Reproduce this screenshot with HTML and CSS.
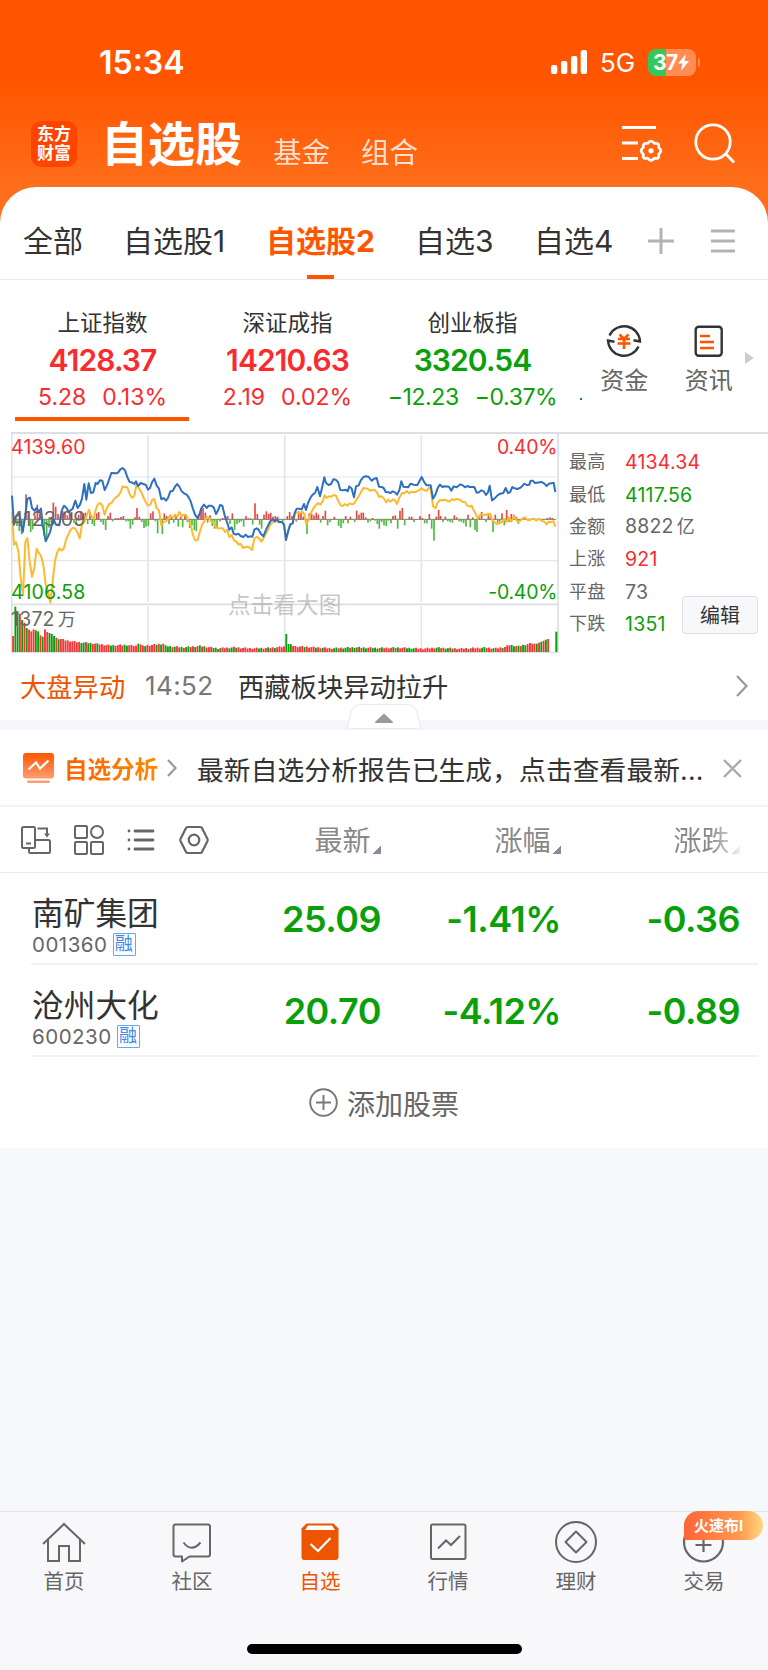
FILE: index.html
```
<!DOCTYPE html>
<html lang="zh-CN">
  <head>
    <meta charset="utf-8">
    <title>自选股</title>
    <link rel="stylesheet" href="styles.css">
  </head>
  <body>
    <header class="top">
      <div class="status">
        <span class="time">15:34</span>
        <svg class="signal" width="36" height="24" viewBox="0 0 36 24" fill="#fff">
          <rect x="0" y="15" width="6.3" height="9" rx="2"/>
          <rect x="10" y="11" width="6.3" height="13" rx="2"/>
          <rect x="20" y="6" width="6.3" height="18" rx="2"/>
          <rect x="29.7" y="0" width="6.3" height="24" rx="2"/>
        </svg>
        <span class="net">5G</span>
        <span class="battery">37<svg width="11" height="17" viewBox="0 0 11 17" fill="#fff"><path d="M8 0 0 9.500h4.500L3 17l8-10H6.500z"/></svg></span>
        <i class="battery-tip"></i>
      </div>
      <div class="nav">
        <div class="logo"><span>东方</span><span>财富</span></div>
        <h1>自选股</h1>
        <span class="nav-item">基金</span>
        <span class="nav-item">组合</span>
        <svg class="ico-filter" width="42" height="42" viewBox="0 0 42 42" fill="none" stroke="#fff" stroke-width="2.800">
          <path d="M1 4.500h34M1 20h16M1 35.500h16"/>
          <path stroke-linejoin="round" d="M25.600 20.200q3.400-4.400 6.800 0q5.400-.8 4.200 3.800q4.400 4 0 7.200q1.200 5-4.200 3.800q-3.400 4.600-6.800 0q-5.400 1.200-4.200-3.800q-4.400-3.200 0-7.200q-1.200-4.600 4.200-3.800z" transform="translate(1 .2)"/>
          <circle cx="30" cy="27.800" r="2.600" fill="#fff" stroke="none"/>
        </svg>
        <svg class="ico-search" width="42" height="42" viewBox="0 0 42 42" fill="none" stroke="#fff" stroke-width="2.800">
          <circle cx="19" cy="19" r="17.200"/>
          <path d="M32 31l8 8.500"/>
        </svg>
      </div>
    </header>

    <main class="panel">
      <nav class="groups">
        <span>全部</span>
        <span>自选股1</span>
        <span class="on">自选股2</span>
        <span>自选3</span>
        <span>自选4</span>
        <svg width="26" height="26" viewBox="0 0 26 26" stroke="#b3b3b3" stroke-width="3"><path d="M13 0v26M0 13h26"/></svg>
        <svg width="24" height="26" viewBox="0 0 24 26" stroke="#b3b3b3" stroke-width="2.800"><path d="M0 3h24M0 13h24M0 23h24"/></svg>
      </nav>

      <section class="indices">
        <div class="index up on">
          <span class="name">上证指数</span>
          <b>4128.37</b>
          <span class="chg"><span>5.28</span><span>0.13%</span></span>
        </div>
        <div class="index up">
          <span class="name">深证成指</span>
          <b>14210.63</b>
          <span class="chg"><span>2.19</span><span>0.02%</span></span>
        </div>
        <div class="index down">
          <span class="name">创业板指</span>
          <b>3320.54</b>
          <span class="chg"><span>−12.23</span><span>−0.37%</span></span>
        </div>
        <i class="next-dot"></i>
        <div class="tool">
          <svg width="36" height="36" viewBox="0 0 36 36" fill="none" stroke="#333" stroke-width="2.400">
            <path d="M3.500 12.500A16 16 0 0 1 34 18.500l-6.500-1.200M32.500 23.500A16 16 0 0 1 2 17.500l6.500 1.200"/>
            <path stroke="#ff5500" stroke-width="2.600" d="M13.500 11.500l4.500 4.500 4.500-4.500M12 16h12M11.500 20.500h13M18 16v10"/>
          </svg>
          <span>资金</span>
        </div>
        <div class="tool">
          <svg width="36" height="36" viewBox="0 0 36 36" fill="none" stroke="#333" stroke-width="2.400">
            <rect x="4.700" y="3.700" width="26" height="29" rx="3"/>
            <path stroke="#ff5500" stroke-width="2.500" d="M9 13h10M9 19h14M9 25h14"/>
          </svg>
          <span>资讯</span>
        </div>
        <svg class="more" width="9" height="12" viewBox="0 0 9 12" fill="#ccc"><path d="M0 0l9 6-9 6z"/></svg>
      </section>

      <section class="market">
        <div class="chart">
          <svg id="chart" width="548" height="221" viewBox="33 22 1644 663" fill="none">
            <g stroke="#e4e6ee" stroke-width="5">
              <path stroke-width="3.500" d="M33 157H1674M33 408H1674"/>
              <path d="M444 32V533M444 545V683M854 32V533M854 545V683M1264 32V533M1264 545V683"/>
              <path stroke="#dcdfe5" d="M33 539H1674M33 684H1677M35 24V684M1674 24V684"/>
            </g>
            <path stroke="#777" stroke-width="3" d="M37 284H1668"/>
            <g id="bars"></g>
            <g id="volume"></g>
            <polyline class="line-avg" points="36,262 42,360 48,353 55,378 62,460 69,512 76,352 82,340 89,410 96,456 103,430 110,372 116,384 123,394 130,420 137,480 144,500 151,534 158,470 165,408 171,385 178,371 185,378 192,370 198,345 205,330 212,315 219,309 226,312 233,325 239,342 246,300 253,292 260,272 267,255 274,275 281,282 287,256 293,240 300,235 307,243 314,270 320,253 327,238 334,236 341,225 348,218 355,213 362,202 368,185 375,188 382,188 389,208 396,219 403,213 409,181 416,190 423,200 430,217 437,232 444,243 451,240 457,225 463,223 470,250 477,258 484,303 491,292 498,290 505,281 511,271 518,280 525,270 532,276 538,262 545,274 552,270 559,272 566,290 573,305 579,332 586,347 593,347 600,320 607,298 613,290 620,277 627,279 634,291 641,292 648,308 655,311 668,311 675,322 682,315 688,338 695,331 702,347 709,351 715,360 722,357 729,370 736,367 743,366 750,370 756,376 763,342 770,336 777,341 784,351 790,342 797,328 804,315 811,300 818,293 825,290 832,291 839,293 846,293 852,299 858,343 864,320 870,300 878,296 885,265 892,264 899,267 906,260 913,268 919,299 926,285 933,265 940,251 947,242 954,235 961,240 968,230 974,212 980,220 987,215 994,216 1001,211 1008,213 1015,229 1022,242 1028,244 1035,238 1042,243 1049,236 1056,239 1062,237 1069,225 1076,215 1083,202 1090,190 1103,192 1110,198 1117,196 1124,195 1131,204 1138,217 1145,215 1152,222 1159,233 1165,225 1172,231 1179,224 1185,227 1191,238 1198,219 1206,205 1213,206 1220,199 1227,206 1234,201 1241,203 1248,201 1255,198 1265,191 1272,196 1280,199 1287,189 1292,192 1299,245 1306,251 1313,234 1320,226 1327,227 1334,225 1341,228 1348,231 1355,224 1362,226 1369,223 1380,225 1388,232 1395,232 1402,243 1410,246 1415,243 1420,255 1426,266 1434,282 1442,269 1449,270 1456,271 1463,268 1470,267 1476,285 1484,293 1491,299 1498,293 1505,293 1512,283 1519,292 1527,278 1534,291 1542,275 1548,285 1555,293 1562,287 1570,280 1577,281 1584,287 1600,282 1608,286 1618,283 1626,289 1633,291 1640,299 1646,291 1653,293 1660,289 1666,306"/>
            <polyline class="line-idx" points="36,213 42,300 48,275 58,268 68,322 75,280 82,223 90,219 96,250 103,258 110,250 116,262 123,252 128,300 137,350 150,323 160,282 168,300 178,302 185,258 192,243 200,250 206,262 218,252 226,228 233,250 240,240 246,222 253,178 259,225 266,176 273,205 280,203 287,175 293,178 300,167 307,168 314,196 322,180 334,145 350,146 355,143 361,134 368,130 375,137 383,160 389,172 395,173 403,178 408,170 414,184 422,175 430,178 437,180 444,195 450,190 456,173 463,162 470,183 477,192 484,224 491,220 498,228 504,220 511,200 518,199 525,186 531,178 538,186 545,200 552,206 560,210 566,218 572,230 578,250 585,270 592,280 598,270 604,250 612,240 620,250 626,243 634,243 641,248 648,268 655,255 660,241 667,243 674,272 682,295 688,315 695,308 701,327 708,330 715,327 722,334 730,337 737,330 744,337 750,335 757,336 763,315 770,311 776,315 783,328 790,335 797,318 804,303 811,290 818,284 824,290 830,284 838,292 846,292 852,300 858,346 865,318 871,299 878,296 884,265 890,252 898,252 905,254 912,238 918,256 924,235 932,218 938,210 945,205 952,187 960,215 966,190 973,158 978,175 986,181 993,178 1000,164 1007,165 1014,172 1021,196 1030,197 1038,195 1043,200 1048,185 1055,192 1062,218 1068,185 1076,182 1082,168 1090,157 1098,155 1105,156 1115,168 1123,162 1130,160 1137,186 1145,187 1151,190 1157,202 1165,203 1172,205 1178,200 1185,203 1191,210 1198,197 1204,170 1210,186 1224,188 1232,177 1240,180 1252,181 1265,157 1273,173 1280,182 1292,182 1299,222 1306,210 1314,188 1320,180 1327,187 1334,185 1347,186 1354,198 1361,185 1370,188 1381,179 1388,182 1395,188 1402,184 1409,187 1423,187 1430,204 1437,203 1444,197 1451,200 1458,211 1464,203 1469,183 1476,227 1483,222 1490,215 1498,208 1510,205 1517,190 1524,205 1530,203 1537,187 1544,191 1552,193 1560,190 1566,185 1573,177 1580,181 1588,180 1592,168 1598,168 1605,175 1625,172 1633,177 1640,184 1647,177 1661,174 1666,202"/>
          </svg>
          <span class="lab l1 red">4139.60</span>
          <span class="lab l2">4123.09</span>
          <span class="lab l3 green">4106.58</span>
          <span class="lab l4">1372<em>万</em></span>
          <span class="lab r1 red">0.40%</span>
          <span class="lab r2 green">-0.40%</span>
          <span class="hint">点击看大图</span>
        </div>
        <dl class="stats">
          <dt>最高</dt><dd class="red">4134.34</dd>
          <dt>最低</dt><dd class="green">4117.56</dd>
          <dt>金额</dt><dd>8822<em>亿</em></dd>
          <dt>上涨</dt><dd class="red">921</dd>
          <dt>平盘</dt><dd>73</dd>
          <dt>下跌</dt><dd class="green">1351</dd>
        </dl>
        <button class="edit">编辑</button>
      </section>

      <section class="news">
        <span class="tag">大盘异动</span>
        <span class="clock">14:52</span>
        <span class="headline">西藏板块异动拉升</span>
        <svg width="12" height="22" viewBox="0 0 12 22" fill="none" stroke="#999" stroke-width="2.200"><path d="M1 1l9.500 10L1 21"/></svg>
      </section>

      <div class="strip">
        <svg class="handle" width="76" height="27" viewBox="0 0 76 27">
          <path d="M1 25.500L5 9Q7 1.500 15 1.500H61Q69 1.500 71 9L75 25.500z" fill="#fff" stroke="#ececee" stroke-width="1.200"/>
          <path d="M38 10.500l9 8.500q.4 1-1 1H30q-1.400 0-1-1z" fill="#999"/>
        </svg>
      </div>

      <section class="analysis">
        <svg class="ana-ico" width="31" height="31" viewBox="0 0 31 31">
          <defs><linearGradient id="g" x1="0" y1="0" x2="0" y2="1"><stop offset="0" stop-color="#ff5500"/><stop offset="1" stop-color="#ff9d70"/></linearGradient></defs>
          <rect width="31" height="25.500" rx="3" fill="url(#g)"/>
          <path d="M5.500 16.500l7.500-7 4 6 8.500-8" fill="none" stroke="#fff" stroke-width="2.200"/>
          <rect x="4" y="27.500" width="23" height="2.500" rx="1.200" fill="#ff9d70"/>
        </svg>
        <b>自选分析</b>
        <svg class="ana-arrow" width="10" height="18" viewBox="0 0 10 18" fill="none" stroke="#999" stroke-width="2.200"><path d="M1 1l7.500 8L1 17"/></svg>
        <span class="msg">最新自选分析报告已生成，点击查看最新...</span>
        <svg width="19" height="19" viewBox="0 0 19 19" stroke="#aaa" stroke-width="2.400"><path d="M1 1l17 17M18 1L1 18"/></svg>
      </section>

      <section class="thead">
        <svg width="30" height="30" viewBox="0 0 30 30" fill="none" stroke="#666" stroke-width="2">
          <rect x="1" y="2" width="13" height="21" rx="1.500"/><path d="M5 18.500h5M16.500 3.500h9.500v6M14 15h13.500q1.500 0 1.500 1.500v10q0 1.500-1.500 1.500h-18q-1.500 0-1.500-1.500v-3"/><path fill="#666" stroke="none" d="M23 8.500h6l-3 4z"/>
        </svg>
        <svg width="30" height="30" viewBox="0 0 30 30" fill="none" stroke="#666" stroke-width="2">
          <rect x="1" y="1" width="12" height="12" rx="1"/><circle cx="23" cy="7" r="6"/><rect x="1" y="17" width="12" height="12" rx="1"/><rect x="17" y="17" width="12" height="12" rx="1"/>
        </svg>
        <svg width="30" height="30" viewBox="0 0 30 30" fill="none" stroke="#666" stroke-width="2.800" stroke-linecap="round">
          <path d="M9 6h18M9 15h18M9 24h18M3 6h.01M3 15h.01M3 24h.01"/>
        </svg>
        <svg width="30" height="30" viewBox="0 0 30 30" fill="none" stroke="#666" stroke-width="2.200" stroke-linejoin="round">
          <path d="M8.500 2h13q1 0 1.500 1l5.500 11q.5 1 0 2L23 27q-.5 1-1.500 1h-13q-1 0-1.500-1L1.500 16q-.5-1 0-2L7 3q.5-1 1.500-1z"/><circle cx="15" cy="15" r="5.300"/>
        </svg>
        <span class="col c1">最新</span>
        <span class="col c2">涨幅</span>
        <span class="col c3">涨跌</span>
      </section>

      <section class="stocks">
        <div class="stock">
          <div class="who"><span class="sname">南矿集团</span><span class="code">001360<i>融</i></span></div>
          <b>25.09</b><b>-1.41%</b><b>-0.36</b>
        </div>
        <div class="stock">
          <div class="who"><span class="sname">沧州大化</span><span class="code">600230<i>融</i></span></div>
          <b>20.70</b><b>-4.12%</b><b>-0.89</b>
        </div>
      </section>

      <div class="add">
        <svg width="29" height="29" viewBox="0 0 29 29" fill="none" stroke="#777" stroke-width="1.900"><circle cx="14.500" cy="14.500" r="13.300"/><path d="M14.500 7v15M7 14.500h15"/></svg>
        <span>添加股票</span>
      </div>
    </main>

    <footer class="tabbar">
      <div class="tab">
        <svg width="44" height="44" viewBox="0 0 44 44" fill="none" stroke="#666" stroke-width="2"><path d="M1 23L22 3l21 20M6 19v21h11V25h10v15h11V19"/></svg>
        <span>首页</span>
      </div>
      <div class="tab">
        <svg width="44" height="44" viewBox="0 0 44 44" fill="none" stroke="#666" stroke-width="2" stroke-linejoin="round"><path d="M5 3.500h33q2 0 2 2v28q0 2-2 2H19.500L12 40.500v-5H5.500q-2 0-2-2v-28q0-2 2-2zM13.500 21.500q8 10.500 17 0"/></svg>
        <span>社区</span>
      </div>
      <div class="tab on">
        <svg width="44" height="44" viewBox="0 0 44 44"><path d="M8.500 2.500h27l5 5V36q0 3-3 3h-31q-3 0-3-3V7.500z" fill="#ee5500"/><path d="M10 4.500h24l3 4.500H7z" fill="#fff"/><path d="M12.500 23l7.500 7L32.500 17" fill="none" stroke="#fff" stroke-width="2.200"/></svg>
        <span>自选</span>
      </div>
      <div class="tab">
        <svg width="44" height="44" viewBox="0 0 44 44" fill="none" stroke="#666" stroke-width="2"><rect x="5" y="3.500" width="34.500" height="34.500" rx="1.500"/><path d="M12 27.500l8-8 5 4.500 9-9"/></svg>
        <span>行情</span>
      </div>
      <div class="tab">
        <svg width="44" height="44" viewBox="0 0 44 44" fill="none" stroke="#666" stroke-width="2" stroke-linejoin="round"><circle cx="22" cy="21" r="20"/><path d="M22 10.500L32.500 21 22 31.500 11.500 21z"/></svg>
        <span>理财</span>
      </div>
      <div class="tab">
        <svg width="44" height="44" viewBox="0 0 44 44" fill="none" stroke="#666" stroke-width="2.200"><circle cx="21.500" cy="21" r="19.500"/><path d="M21.500 13v18M13.500 24h16"/></svg>
        <span>交易</span>
        <em class="promo">火速布I</em>
      </div>
      <i class="home-bar"></i>
    </footer>

    <script>
      const NS = "http://www.w3.org/2000/svg";

      function rect(parent, x, y, w, h, fill) {
        const r = document.createElementNS(NS, "rect");
        r.setAttribute("x", x);
        r.setAttribute("y", y);
        r.setAttribute("width", w);
        r.setAttribute("height", h);
        r.setAttribute("fill", fill);
        parent.appendChild(r);
      }

      // momentum bars around the zero line: [x, height], negative = below
      const bars = [
        [44,-12],[51,-20],[58,-35],[65,-45],[71,-22],[78,75],[85,15],[92,-38],[98,-30],[105,12],[112,44],[119,18],[126,-22],[133,-50],[140,-55],[147,-25],[154,-12],
        [160,50],[167,38],[174,16],[181,8],[188,25],[195,20],[202,12],[209,18],[215,22],[222,-10],[229,-16],[236,14],[243,24],[249,18],[256,20],[263,-14],[270,20],[277,-14],[283,-20],[290,18],[296,22],[303,-8],[310,-16],[317,-32],[324,10],[331,20],[338,-6],[347,4],[355,4],[363,7],[370,10],[378,-6],[385,-6],[391,-28],[398,-16],[405,6],[411,34],[418,8],[425,-8],[432,-26],[438,-22],[445,-20],[452,18],[459,24],[466,-6],[473,-42],[480,8],[487,-44],[493,18],[500,10],[507,-14],[514,8],[521,-10],[528,10],[535,-22],[542,8],[548,-24],[555,10],[562,-8],[569,-26],[576,-18],[583,-32],[589,-36],[596,16],[603,28],[609,34],[616,20],[623,-10],[630,12],[637,-20],[644,-28],[651,-24],[660,-6],[668,4],[676,10],[683,10],[690,-14],[697,18],[704,-32],[711,-14],[718,-10],[724,-6],[731,-22],[738,10],[745,3],[752,3],[758,-16],[765,48],[772,16],[779,-16],[785,-28],[792,14],[799,24],[806,16],[812,20],[819,8],[826,10],[833,8],[848,-8],[862,10],[869,22],[876,10],[882,10],[889,-7],[896,24],[903,20],[910,8],[921,-44],[928,18],[935,16],[942,12],[949,20],[955,14],[962,-10],[969,10],[976,26],[983,-18],[990,-8],[1003,8],[1016,-20],[1023,-26],[1030,-12],[1037,10],[1044,-12],[1051,8],[1064,-8],[1070,26],[1077,14],[1084,20],[1090,20],[1097,6],[1104,-10],[1111,-6],[1118,4],[1125,-4],[1132,-14],[1138,-28],[1145,-8],[1152,-18],[1159,-20],[1166,-4],[1173,-12],[1179,10],[1186,12],[1193,-28],[1200,26],[1207,34],[1214,-18],[1228,8],[1235,8],[1242,-8],[1260,10],[1267,4],[1274,-12],[1281,-12],[1288,16],[1295,-28],[1302,-64],[1309,8],[1316,28],[1322,10],[1329,-8],[1336,8],[1343,-6],[1350,-8],[1357,-10],[1363,12],[1370,6],[1377,-6],[1384,-8],[1391,-12],[1398,-22],[1404,14],[1411,-24],[1418,6],[1425,-32],[1431,-38],[1438,12],[1445,22],[1458,-8],[1465,12],[1472,6],[1479,-38],[1486,14],[1493,-10],[1499,-14],[1506,18],[1513,-18],[1520,28],[1527,-8],[1534,16],[1541,14],[1548,8],[1555,-14],[1575,8],[1590,-4],[1609,-6],[1625,-6],[1642,4],[1650,6],[1657,4]
      ];
      const barBox = document.getElementById("bars");
      for (const [x, h] of bars) {
        rect(barBox, x - 2.5, h > 0 ? 284 - h : 284, 5, Math.abs(h), h > 0 ? "#e24a4a" : "#55b843");
      }

      // volume, one column per minute; heights between two stops are interpolated
      const stops = [
        [0,48],[1,136],[2,122],[3,115],[4,96],[5,88],[6,72],[8,62],[9,68],[11,62],[12,50],[13,46],[14,68],[15,60],[17,54],[19,42],[24,34],[28,30],[35,26],[42,20],[50,21],[54,18],[55,27],[57,18],[62,22],[66,25],[67,18],[75,14],[82,18],[90,11],[97,14],[104,11],[112,12],[119,16],[120,54],[121,24],[124,17],[130,15],[140,11],[150,14],[160,12],[170,13],[180,10],[186,13],[196,10],[207,13],[212,11],[216,15],[218,21],[222,17],[226,24],[230,27],[234,36],[235,40]
      ];
      const greens = "0110101000011010001110100000000001100110010000001100000110000100010000110101110110010110";
      const volBox = document.getElementById("volume");
      for (let i = 0; i < 227; i++) {
        const n = stops.findIndex(s => s[0] >= i);
        const b = stops[n];
        const a = stops[n - 1] || b;
        let h = b[0] === a[0] ? b[1] : a[1] + (b[1] - a[1]) * (i - a[0]) / (b[0] - a[0]);
        if (i > 18 && i !== 120) h += (i * 7 % 5) - 2;
        const green = i === 1 || i === 120 || (i !== 0 && greens[(i + (i >> 3)) % greens.length] === "1");
        rect(volBox, 36.5 + i * 6.83, 682 - h, 5.6, h, green ? "#0aa00a" : "#f63538");
      }
      // closing minutes
      const last = [27, 25, 25, 25, 28, 31, 34, 37, 39];
      last.forEach((h, i) => rect(volBox, 1587 + i * 6.83, 682 - h, 5.6, h, i > 2 && i < 8 && i % 2 ? "#0aa00a" : "#f63538"));
      rect(volBox, 1666, 621, 6, 61, "#0aa00a");
    </script>
  </body>
</html>
```
FILE: styles.css
```
* {
  box-sizing: border-box;
}

body {
  width: 768px;
  height: 1670px;
  margin: 0;
  display: flex;
  flex-direction: column;
  background: #f7f8fa;
  color: #333;
  font-family: Inter, "Noto Sans CJK SC", sans-serif;
  overflow: hidden;
}

svg {
  display: block;
  flex: none;
}

em, i {
  font-style: normal;
}

span, b {
  white-space: nowrap;
}

.red, .up {
  color: #fa2b2e;
}

.green, .down {
  color: #0aa00a;
}

/* header */
.top {
  height: 227px;
  flex: none;
  background: linear-gradient(#ff5500 0, #ff5500 80px, #ff6e1a 187px);
  color: #fff;
}

.status {
  height: 100px;
  padding: 24px 0 0 99px;
  display: flex;
  align-items: center;
}

.time {
  width: 452px;
  font-size: 32px;
  font-weight: 600;
}

.net {
  margin-left: 13px;
  width: 35px;
  font-size: 26px;
}

.battery {
  width: 48px;
  height: 27px;
  margin-left: 13px;
  padding-left: 5px;
  display: flex;
  align-items: center;
  border-radius: 8px;
  background: linear-gradient(90deg, #34c759 18px, #ff8c52 18px);
  font-size: 21px;
  font-weight: 700;
  letter-spacing: -0.5px;
}

.battery-tip {
  width: 2px;
  height: 9px;
  margin-left: 2px;
  border-radius: 0 2px 2px 0;
  background: #ff8c52;
}

.nav {
  height: 87px;
  padding-left: 31px;
  display: flex;
  align-items: center;
}

.logo {
  width: 46px;
  height: 46px;
  display: flex;
  flex-direction: column;
  align-items: center;
  justify-content: center;
  border-radius: 10px;
  background: #ff4400;
  font-size: 17px;
  font-weight: 700;
  line-height: 19px;
}

.nav h1 {
  width: 172px;
  margin: 0 0 0 24px;
  font-size: 47px;
  font-weight: 700;
  line-height: 60px;
}

.nav-item {
  width: 88px;
  padding-top: 18px;
  font-size: 28.500px;
  line-height: 36px;
  opacity: 0.8;
}

.ico-filter {
  margin-left: 172px;
}

.ico-search {
  margin-left: 31px;
}

.panel {
  height: 961px;
  margin-top: -40px;
  flex: none;
  border-radius: 36px 36px 0 0;
  background: #fff;
}

.groups {
  height: 93px;
  padding: 16px 0 0 23px;
  display: grid;
  grid-template-columns: 100px 143px 149px 119px 114px 63px 1fr;
  align-items: center;
  border-bottom: 1px solid #ebebeb;
  font-size: 30px;
  line-height: 76px;
}

.groups .on {
  width: 108px;
  color: #ff5500;
  font-weight: 700;
  background: linear-gradient(#ff5500, #ff5500) 50% 100% / 27px 4px no-repeat;
}

/* index quotes */
.indices {
  height: 152px;
  padding-left: 10px;
  display: flex;
}

.index {
  width: 185px;
  height: 141px;
  padding-top: 26px;
  display: flex;
  flex-direction: column;
  align-items: center;
  flex: none;
}

.index .name {
  color: #333;
  font-size: 22.500px;
  line-height: 34px;
}

.index b {
  font-size: 30px;
  font-weight: 600;
  line-height: 40px;
  letter-spacing: -0.9px;
}

.index .chg {
  display: flex;
  gap: 16px;
  font-size: 23px;
  line-height: 34px;
}

.down .chg {
  letter-spacing: -0.4px;
}

.index.on {
  background: linear-gradient(#ff5500, #ff5500) 5px 100% / 174px 4px no-repeat;
}

.next-dot {
  width: 2px;
  height: 2px;
  margin: 118px 0 0 15px;
  background: #0aa00a;
}

.tool {
  width: 84.500px;
  padding-top: 43px;
  display: flex;
  flex-direction: column;
  align-items: center;
  color: #666;
  font-size: 24px;
  line-height: 34px;
}

.tool span {
  margin-top: 5px;
}

.more {
  margin: 72px 0 0 -6px;
}

/* intraday chart */
.market {
  height: 222px;
  padding-left: 11px;
  display: flex;
  background: linear-gradient(#dcdfe5, #dcdfe5) 11px 0 / 100% 2px no-repeat;
}

.chart {
  width: 548px;
  position: relative;
  flex: none;
}

.line-avg, .line-idx {
  stroke: #ffb92e;
  stroke-width: 6;
  stroke-linejoin: round;
}

.line-idx {
  stroke: #2d6fc0;
}

.lab {
  position: absolute;
  color: #666;
  font-size: 19.500px;
  line-height: 24px;
  letter-spacing: 0.2px;
}

.lab.red {
  color: #fa2b2e;
}

.lab.green {
  color: #0aa00a;
}

.l1, .l2, .l3, .l4 {
  left: 0;
}

.r1, .r2 {
  right: 2px;
  letter-spacing: -0.3px;
}

.l1, .r1 {
  top: 3px;
}

.l2 {
  top: 75px;
}

.l3, .r2 {
  top: 148px;
}

.l4 {
  top: 175px;
}

.lab em, .stats em {
  margin-left: 3px;
  font-size: 18px;
}

.hint {
  position: absolute;
  left: 217px;
  top: 157px;
  color: rgba(150, 150, 150, 0.55);
  font-size: 22.700px;
  line-height: 32px;
}

.stats {
  margin: 14px 0 0 10px;
  display: grid;
  grid-template-columns: 56px 57px;
  grid-auto-rows: 32.400px;
  align-items: center;
  color: #666;
  font-size: 19.500px;
  line-height: 30px;
  letter-spacing: 0.2px;
}

.stats dt {
  font-size: 18px;
}

.stats dd {
  margin: 0;
  white-space: nowrap;
}

.edit {
  width: 76px;
  height: 38px;
  margin: 164px 0 0 0;
  padding: 0;
  border: 1px solid #dcdfe5;
  border-radius: 4px;
  background: #f7f8fa;
  color: #333;
  font: 20px/36px "Noto Sans CJK SC", sans-serif;
}

.news {
  height: 66px;
  padding: 0 20px 3px 20px;
  display: flex;
  align-items: center;
  font-size: 26.300px;
}

.tag {
  width: 125px;
  color: #ee5500;
}

.clock {
  width: 93px;
  color: #777;
  font-size: 26px;
  letter-spacing: 0.4px;
}

.headline {
  flex: 1;
}

.strip {
  height: 10px;
  background: #f5f6f9;
  position: relative;
}

.handle {
  position: absolute;
  left: 346px;
  top: -17px;
}

.analysis {
  height: 77px;
  padding: 1px 26px 0 23px;
  display: flex;
  align-items: center;
  border-bottom: 2px solid #f3f3f4;
}

.analysis b {
  width: 103px;
  margin-left: 10px;
  font-size: 23.500px;
  background: linear-gradient(100deg, #ff6000, #ff8d00);
  -webkit-background-clip: text;
  background-clip: text;
  color: transparent;
}

.analysis .msg {
  flex: 1;
  margin-left: 20px;
  font-size: 26.700px;
  letter-spacing: 0.15px;
}

/* watch list */
.thead {
  height: 66px;
  padding-left: 21px;
  display: flex;
  align-items: center;
  gap: 22.500px;
  border-bottom: 1px solid #ebebeb;
}

.col {
  width: 180px;
  margin: 3px 0 0 -22.500px;
  display: flex;
  align-items: flex-end;
  justify-content: flex-end;
  color: #888;
  font-size: 28px;
  line-height: 38px;
}

.col::after {
  content: "";
  width: 8px;
  height: 8px;
  margin: 0 0 6px 2px;
  background: linear-gradient(135deg, transparent 50%, #888b99 50%);
}

.c1 {
  width: 172px;
}

.c3 {
  width: 179px;
  -webkit-mask: linear-gradient(90deg, #000 148px, transparent 184px);
  mask: linear-gradient(90deg, #000 148px, transparent 184px);
}

.stocks {
  margin: 0 10px 0 31px;
}

.stock {
  height: 91.800px;
  padding-top: 21px;
  display: grid;
  grid-template-columns: 169px 180px 180px 179px;
  border-bottom: 2px solid #f1f1f2;
}

.stock b {
  margin-right: -1px;
  color: #0aa00a;
  font-size: 36px;
  font-weight: 600;
  line-height: 50px;
  letter-spacing: -0.5px;
  text-align: right;
}

.who {
  display: flex;
  flex-direction: column;
  padding-left: 1px;
}

.sname {
  padding-top: 1px;
  font-size: 31.700px;
  line-height: 38px;
}

.code {
  height: 23px;
  display: flex;
  align-items: center;
  color: #666;
  font-size: 20.500px;
  letter-spacing: 0.5px;
}

.code i {
  width: 23px;
  height: 23px;
  margin-left: 5px;
  border: 1px solid #6aa6ea;
  border-radius: 1px;
  color: #3c8ae6;
  font-size: 18px;
  line-height: 20px;
  text-align: center;
}

.add {
  height: 92px;
  display: flex;
  align-items: center;
  justify-content: center;
  gap: 9px;
  color: #666;
  font-size: 28px;
}

/* bottom bar */
.tabbar {
  height: 159px;
  margin-top: auto;
  flex: none;
  display: grid;
  grid-template-columns: repeat(6, 128px);
  grid-template-rows: 132px 12px;
  border-top: 1px solid #e3e4e6;
  background: #f8f8fb;
}

.tab {
  padding-top: 9px;
  display: flex;
  flex-direction: column;
  align-items: center;
  position: relative;
  color: #666;
  font-size: 20.500px;
  line-height: 32px;
}

.tab span {
  margin-top: 1px;
}

.tab.on {
  color: #ee5500;
}

.promo {
  position: absolute;
  left: 44px;
  top: -1px;
  width: 79px;
  height: 29px;
  padding-left: 10px;
  border-radius: 15px 15px 15px 3px;
  background: linear-gradient(90deg, #ff6438, #ff9a50 70%, #ffd880);
  color: #fff;
  font-size: 15px;
  font-weight: 700;
  line-height: 29px;
}

.home-bar {
  grid-column: 1 / -1;
  width: 275px;
  height: 10px;
  justify-self: center;
  border-radius: 5px;
  background: #000;
}
```
